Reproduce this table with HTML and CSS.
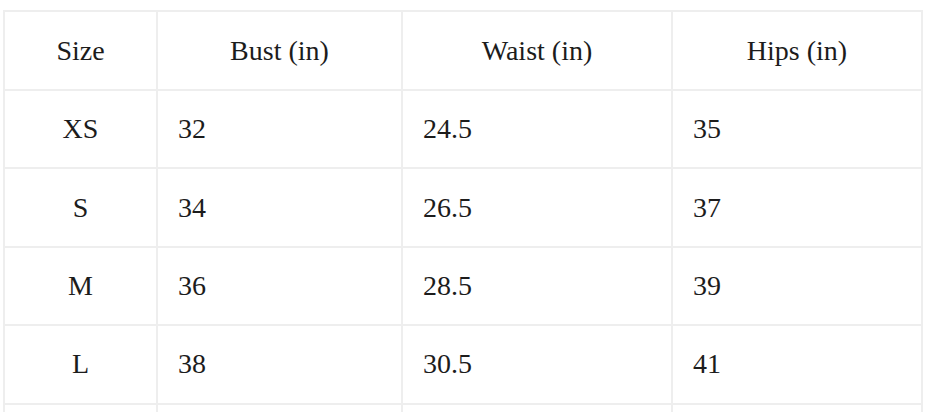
FILE: index.html
```html
<!DOCTYPE html>
<html lang="en">
<head>
<meta charset="utf-8">
<title>Size chart</title>
<link rel="stylesheet" href="styles.css">
</head>
<body>
<table class="size-table">
  <colgroup>
    <col class="c1"><col class="c2"><col class="c3"><col class="c4">
  </colgroup>
  <thead>
    <tr><th>Size</th><th>Bust (in)</th><th>Waist (in)</th><th>Hips (in)</th></tr>
  </thead>
  <tbody>
    <tr><td class="sz">XS</td><td>32</td><td>24.5</td><td>35</td></tr>
    <tr><td class="sz">S</td><td>34</td><td>26.5</td><td>37</td></tr>
    <tr><td class="sz">M</td><td>36</td><td>28.5</td><td>39</td></tr>
    <tr><td class="sz">L</td><td>38</td><td>30.5</td><td>41</td></tr>
    <tr class="more"><td class="sz"></td><td></td><td></td><td></td></tr>
  </tbody>
</table>
</body>
</html>
```

FILE: styles.css
```css
html, body {
  margin: 0;
  padding: 0;
  background: #ffffff;
}
body {
  padding: 10px 0 0 3px;
  font-family: "Liberation Serif", "Times New Roman", serif;
  font-size: 28px;
  color: #1c1c1c;
}
.size-table {
  border-collapse: separate;
  border-spacing: 0;
  empty-cells: show;
  table-layout: fixed;
  width: 920px;
  border-top: 2px solid #eeeeee;
  border-left: 2px solid #eeeeee;
}
.c1 { width: 153px; }
.c2 { width: 245px; }
.c3 { width: 270px; }
.c4 { width: 250px; }
.size-table th,
.size-table td {
  border-right: 2px solid #eeeeee;
  border-bottom: 2px solid #eeeeee;
  padding: 0 0 0 20px;
  text-align: left;
  vertical-align: middle;
  font-weight: normal;
  line-height: 1;
  height: 76.4px;
  white-space: nowrap;
  overflow: hidden;
}
.size-table th {
  height: 77px;
  padding: 0;
  text-align: center;
}
.size-table td.sz {
  padding: 0;
  text-align: center;
}
```
